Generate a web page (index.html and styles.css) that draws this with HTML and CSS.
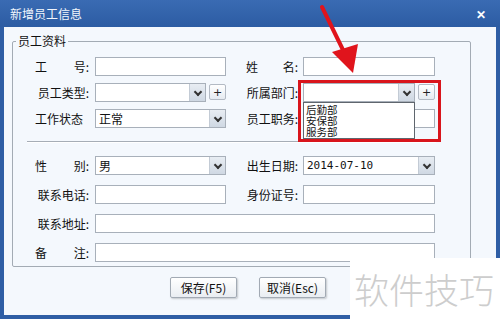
FILE: index.html
```html
<!DOCTYPE html>
<html lang="zh-CN">
<head>
    <meta charset="UTF-8">
    <title>新增员工信息</title>
    <link rel="stylesheet" href="styles.css">
</head>
<body>

    <div class="window">
        <div class="titlebar">
            <span class="title">新增员工信息</span>
            <span class="close">✕</span>
        </div>
        <div class="body">
            <fieldset class="group">
                <legend>员工资料</legend>
                <div class="grid top">
                    <label class="lbl"><span>工</span><span>号:</span></label>
                    <div class="field"></div>
                    <label class="lbl r"><span>姓</span><span>名:</span></label>
                    <div class="field"></div>

                    <label class="lbl">员工类型:</label>
                    <div class="combo-row">
                        <div class="field select short"><span class="arrow"></span></div>
                        <button class="plus">+</button>
                    </div>
                    <label class="lbl r">所属部门:</label>
                    <div class="combo-row">
                        <div class="field select short open">
                            <span class="arrow"></span>
                            <ul class="droplist">
                                <li>后勤部</li>
                                <li>安保部</li>
                                <li>服务部</li>
                            </ul>
                        </div>
                        <button class="plus">+</button>
                    </div>

                    <label class="lbl nocolon">工作状态</label>
                    <div class="field select">正常<span class="arrow"></span></div>
                    <label class="lbl r">员工职务:</label>
                    <div class="field"></div>
                </div>

                <hr class="sep">

                <div class="grid bottom">
                    <label class="lbl"><span>性</span><span>别:</span></label>
                    <div class="field select">男<span class="arrow"></span></div>
                    <label class="lbl r">出生日期:</label>
                    <div class="field select date">2014-07-10<span class="arrow"></span></div>

                    <label class="lbl">联系电话:</label>
                    <div class="field"></div>
                    <label class="lbl r">身份证号:</label>
                    <div class="field"></div>

                    <label class="lbl">联系地址:</label>
                    <div class="field wide"></div>

                    <label class="lbl"><span>备</span><span>注:</span></label>
                    <div class="field wide"></div>
                </div>
            </fieldset>

            <div class="actions">
                <button class="btn">保存(F5)</button>
                <button class="btn">取消(Esc)</button>
            </div>
        </div>
    </div>

    <!-- annotations drawn over the screenshot -->
    <div class="highlight"></div>
    <svg class="arrow-mark" width="60" height="80" viewBox="0 0 60 80">
        <line x1="4" y1="7" x2="28" y2="56" stroke="#e0141c" stroke-width="4" stroke-linecap="round"/>
        <polygon points="14,52 40,44 35,73" fill="#e0141c"/>
    </svg>
    <div class="watermark">软件技巧</div>

</body>
</html>
```

FILE: styles.css
```css
* {
    margin: 0;
    padding: 0;
    box-sizing: border-box;
}
body {
    width: 500px;
    height: 319px;
    overflow: hidden;
    font-family: "Noto Sans CJK SC", "Liberation Sans", sans-serif;
    font-size: 12px;
    color: #111;
    background: #2f5ea5;
    position: relative;
}
.window {
    width: 500px;
    height: 319px;
    display: flex;
    flex-direction: column;
    background: #2f5ea5;
    padding: 0 4px 4px 4px;
}
.titlebar {
    height: 27px;
    display: flex;
    align-items: center;
    justify-content: space-between;
    margin: 0 -4px;
    padding: 0 10px;
    background: linear-gradient(#3a6bb3, #2c5ca3);
    color: #fff;
}
.title {
    font-size: 12px;
    color: #f2f6fc;
}
.close {
    font-size: 12px;
    font-weight: bold;
    color: #fff;
    margin-right: 4px;
}
.body {
    flex: 1;
    background: #f4f8fd;
    display: flex;
    flex-direction: column;
}
.group {
    margin: 7px 25px 0 8px;
    padding: 8px 0 4px 0;
    border: 1px solid #a3abb4;
    border-radius: 2px;
}
.group legend {
    margin-left: 3px;
    padding: 0 2px;
    line-height: 14px;
    font-size: 12px;
}
.grid {
    display: grid;
    grid-template-columns: 82px 131px 77px 132px;
    grid-auto-rows: 20px;
    align-items: center;
}
.grid.top {
    row-gap: 6px;
}
.grid.bottom {
    row-gap: 9px;
}
.lbl {
    justify-self: end;
    width: 54px;
    margin-right: 6px;
    display: flex;
    justify-content: flex-end;
    white-space: nowrap;
}
.lbl span:first-child {
    margin-right: auto;
}
.lbl.r {
    width: 52px;
    margin-right: 5px;
}
.lbl.nocolon {
    justify-content: flex-start;
}
.field {
    height: 19px;
    background: #fff;
    border: 1px solid #a8b0ba;
    display: flex;
    align-items: center;
    padding-left: 3px;
    position: relative;
}
.field.wide {
    grid-column: 2 / 5;
}
.field.date {
    font-family: "DejaVu Sans Mono", monospace;
    font-size: 11px;
}
.select {
    padding-right: 16px;
}
.arrow {
    position: absolute;
    right: 0;
    top: 0;
    bottom: 0;
    width: 16px;
    background: linear-gradient(#e8edf3, #cfd8e3);
    border-left: 1px solid #c3cbd5;
}
.arrow::after {
    content: "";
    position: absolute;
    left: 5px;
    top: 5px;
    width: 4px;
    height: 4px;
    border-right: 2px solid #333;
    border-bottom: 2px solid #333;
    transform: rotate(45deg);
}
.combo-row {
    display: flex;
    align-items: center;
    gap: 3px;
}
.combo-row .short {
    flex: 1;
}
.plus {
    width: 17px;
    height: 16px;
    border: 1px solid #b3bac4;
    border-radius: 2px;
    background: linear-gradient(#ffffff, #e6ebf1);
    font-family: "DejaVu Sans", sans-serif;
    font-size: 11px;
    line-height: 13px;
    color: #222;
}
.droplist {
    position: absolute;
    left: -1px;
    right: -1px;
    top: 18px;
    height: 37px;
    list-style: none;
    background: #fff;
    border: 1px solid #5f666e;
    padding: 1px 0 0 2px;
    z-index: 2;
}
.droplist li {
    font-size: 10.5px;
    line-height: 11px;
    height: 11px;
}
.sep {
    margin: 13px 0 12px 14px;
    width: 409px;
    border: none;
    border-top: 1px solid #a6adb6;
    border-bottom: 1px solid #fff;
}
.actions {
    display: flex;
    justify-content: center;
    gap: 22px;
    margin-top: 10px;
    margin-left: -4px;
}
.btn {
    width: 67px;
    height: 21px;
    border: 1px solid #a2aab4;
    border-radius: 2px;
    background: linear-gradient(#ffffff, #e9edf2);
    box-shadow: 1px 1px 2px rgba(0, 0, 0, 0.2);
    font-family: "Noto Sans CJK SC", sans-serif;
    font-size: 12px;
    color: #111;
}
.highlight {
    position: absolute;
    left: 298px;
    top: 80px;
    width: 143px;
    height: 62px;
    border: 3px solid #d9151c;
}
.arrow-mark {
    position: absolute;
    left: 318px;
    top: 0;
}
.watermark {
    position: absolute;
    left: 350px;
    top: 258px;
    width: 150px;
    height: 61px;
    background: #fff;
    color: #cdcdcd;
    font-size: 35px;
    line-height: 50px;
    padding: 6px 0 0 4px;
    font-weight: 300;
    white-space: nowrap;
}
```
